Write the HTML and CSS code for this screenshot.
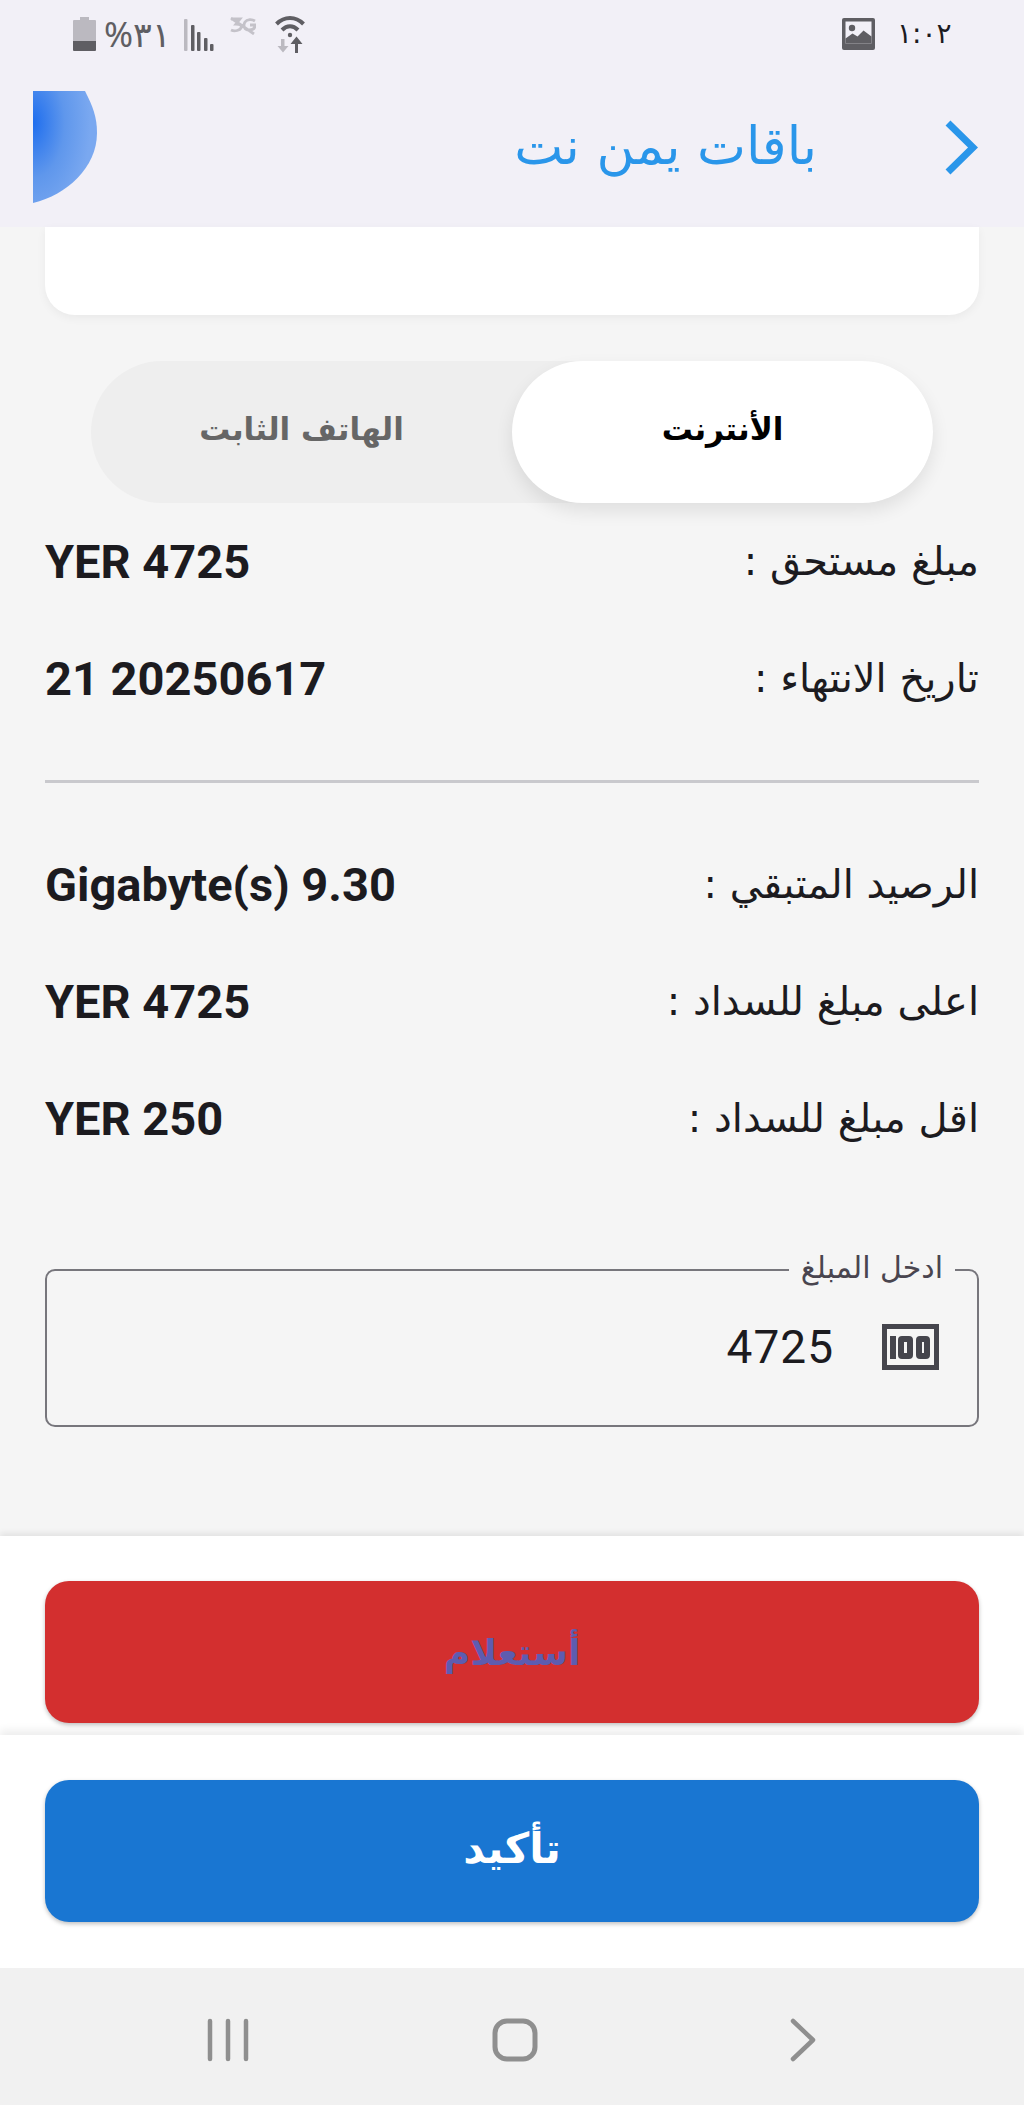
FILE: index.html
```html
<!DOCTYPE html>
<html lang="ar">
<head>
<meta charset="utf-8">
<title>باقات يمن نت</title>
<link rel="stylesheet" href="styles.css">
</head>
<body>
<div class="page">
  <header class="top">
    <div class="status">
      <div class="status-left">
        <svg class="i-batt" viewBox="0 0 23 34"><path fill="#bbb9c0" d="M7 0h9v3h6a1 1 0 0 1 1 1v22H0V4a1 1 0 0 1 1-1h6z"/><path fill="#5f5e63" d="M0 24h23v9a1 1 0 0 1-1 1H1a1 1 0 0 1-1-1z"/></svg>
        <span class="st-text">%٣١</span>
        <svg class="i-signal" viewBox="0 0 30 32"><rect x="0" y="0" width="3.5" height="32" rx="1" fill="#bbb9c0"/><rect x="7" y="6" width="3.5" height="26" rx="1" fill="#5f5e63"/><rect x="13" y="13" width="3.5" height="19" rx="1" fill="#5f5e63"/><rect x="20" y="19" width="3.5" height="13" rx="1" fill="#5f5e63"/><rect x="26" y="25" width="3.5" height="7" rx="1" fill="#5f5e63"/></svg>
        <svg class="i-3g" viewBox="0 0 26 18"><path fill="none" stroke="#c4c2c9" stroke-width="2.800" d="M1 2h9l-4 5c5 0 6 2 5 4s-6 4-10 2M25 4c-3-2-8-2-10 1s-1 8 4 8c3 0 6-1 6-5h-5M1 1l23 16"/></svg>
        <svg class="i-wifi" viewBox="0 0 30 38"><path fill="none" stroke="#5f5e63" stroke-width="4" d="M1.500 9c8-8 19-8 27 0M7 15c5-5 11-5 16 0"/><circle cx="15" cy="20" r="2.200" fill="#5f5e63"/><path fill="#bbb9c0" d="M6 24h3.500v7h4l-5.500 6.500-5.500-6.500h3.500z"/><path fill="#5f5e63" d="M20 38v-9h-4.500l6-7.500 6 7.500H23v9z"/></svg>
      </div>
      <div class="status-right">
        <svg class="i-pic" viewBox="0 0 33 32"><rect width="33" height="32" rx="2" fill="#5f5e63"/><rect x="3.500" y="3.500" width="26" height="22" fill="#f2f0f7"/><circle cx="10" cy="10" r="3.200" fill="#5f5e63"/><path fill="#5f5e63" d="M3.500 25.500v-5l7-5 5 3 6-6 8 6v7z"/></svg>
        <span class="st-time">١:٠٢</span>
      </div>
    </div>
    <div class="appbar">
      <svg class="logo" viewBox="0 0 64 112"><defs><radialGradient id="lg" cx="0" cy="0.28" r="0.9"><stop offset="0" stop-color="#1f6eee"/><stop offset="0.55" stop-color="#5f97ec"/><stop offset="1" stop-color="#7aa8f0"/></radialGradient></defs><path fill="url(#lg)" d="M0 0h52c8 16 12 26 12 42 0 34-30 62-64 70z"/></svg>
      <h1 class="title">باقات يمن نت</h1>
      <svg class="back" viewBox="0 0 33 55"><path fill="none" stroke="#2a96ea" stroke-width="7" d="M3 3l25 24.500L3 52"/></svg>
    </div>
  </header>

  <main class="content">
    <div class="card"></div>
    <div class="toggle">
      <div class="tab tab-on">الأنترنت</div>
      <div class="tab">الهاتف الثابت</div>
    </div>
    <div class="rows rows-a">
      <div class="row"><span class="lbl">مبلغ مستحق :</span><span class="val">YER 4725</span></div>
      <div class="row"><span class="lbl">تاريخ الانتهاء :</span><span class="val">21 20250617</span></div>
    </div>
    <hr class="rule">
    <div class="rows">
      <div class="row"><span class="lbl">الرصيد المتبقي :</span><span class="val">Gigabyte(s) 9.30</span></div>
      <div class="row"><span class="lbl">اعلى مبلغ للسداد :</span><span class="val">YER 4725</span></div>
      <div class="row"><span class="lbl">اقل مبلغ للسداد :</span><span class="val">YER 250</span></div>
    </div>
    <div class="field">
      <span class="field-label">ادخل المبلغ</span>
      <svg class="i-100" viewBox="0 0 57 46"><rect x="2.500" y="2.500" width="52" height="41" fill="none" stroke="#45454d" stroke-width="5"/><rect x="8" y="12" width="6" height="23" fill="#45454d"/><rect x="19" y="15" width="9" height="17" rx="1" fill="none" stroke="#45454d" stroke-width="6"/><rect x="37" y="15" width="8" height="17" rx="1" fill="none" stroke="#45454d" stroke-width="6"/></svg>
      <span class="field-value">4725</span>
    </div>
  </main>

  <section class="bar bar-red"><button class="btn btn-red">أستعلام</button></section>
  <section class="bar bar-blue"><button class="btn btn-blue">تأكيد</button></section>

  <nav class="nav">
    <svg class="n-recent" viewBox="0 0 42 44"><path stroke="#8f8f8f" stroke-width="4.500" stroke-linecap="round" d="M3 3v38M21 3v38M39 3v38"/></svg>
    <svg class="n-home" viewBox="0 0 46 44"><rect x="3" y="3" width="40" height="38" rx="12" fill="none" stroke="#8f8f8f" stroke-width="5"/></svg>
    <svg class="n-back" viewBox="0 0 26 44"><path fill="none" stroke="#8f8f8f" stroke-width="4.500" stroke-linecap="round" stroke-linejoin="round" d="M3 3l20 19L3 41"/></svg>
  </nav>
</div>
</body>
</html>
```

FILE: styles.css
```css
* { box-sizing: border-box; }
html, body { margin: 0; padding: 0; }
body { background: #f5f5f5; font-family: "DejaVu Sans", sans-serif; }
.page { width: 1024px; height: 2105px; display: flex; flex-direction: column; overflow: hidden; }

.top { height: 227px; background: #f2f0f7; flex: none; }
.status { height: 91px; padding: 15px 76px 0 73px; display: flex; justify-content: space-between; align-items: flex-start; }
.status-left, .status-right { display: flex; align-items: flex-start; padding-top: 2px; }
.i-batt { width: 23px; height: 34px; }
.st-text { font-family: "Noto Sans", "DejaVu Sans", sans-serif; font-size: 35px; line-height: 34px; color: #5f5e63; margin-left: 8px; width: 62px; white-space: nowrap; }
.i-signal { width: 30px; height: 32px; margin-left: 18px; margin-top: 2px; }
.i-3g { width: 26px; height: 18px; margin-left: 16px; }
.i-wifi { width: 30px; height: 38px; margin-left: 19px; margin-top: -2px; }
.i-pic { width: 33px; height: 32px; margin-top: 1px; }
.st-time { font-family: "DejaVu Sans", sans-serif; font-size: 28px; line-height: 34px; color: #1c1b1f; margin-left: 22px; width: 51px; white-space: nowrap; }

.appbar { height: 136px; padding: 0 46px 24px 33px; display: flex; align-items: flex-start; }
.logo { width: 64px; height: 112px; flex: none; }
.title { margin: 25px 0 0 418px; width: 302px; text-align: center; font-size: 52px; line-height: 60px; font-weight: 400; color: #2a96ea; white-space: nowrap; direction: rtl; }
.back { width: 33px; height: 55px; margin: 29px 0 0 auto; flex: none; }

.content { flex: 1; min-height: 0; padding: 0 45px; }
.card { height: 88px; background: #fff; border-radius: 0 0 30px 30px; box-shadow: 0 3px 10px rgba(0,0,0,.05); }
.toggle { margin: 46px 46px 0; height: 142px; background: #eeeeee; border-radius: 71px; display: flex; direction: rtl; }
.tab { flex: 1; display: flex; align-items: center; justify-content: center; padding-bottom: 6px; font-size: 31px; font-weight: 700; color: #666; border-radius: 71px; }
.tab-on { background: #fff; color: #000; box-shadow: 0 8px 18px rgba(0,0,0,.09); }

.rows { direction: rtl; display: flex; flex-direction: column; gap: 59px; }
.rows-a { margin-top: 29px; }
.row { height: 58px; display: flex; justify-content: space-between; align-items: center; }
.lbl { font-size: 40px; color: #1c1b1f; white-space: nowrap; }
.val { direction: ltr; font-family: Roboto, sans-serif; font-weight: 700; font-size: 47px; color: #1c1b1f; white-space: nowrap; }
.rule { border: 0; height: 3px; background: #c9c9cd; margin: 73px 0 72px; }

.field { position: relative; margin-top: 122px; height: 158px; border: 2.500px solid #77767c; border-radius: 10px; display: flex; direction: rtl; align-items: center; padding: 0 38px 0 0; }
.field-label { position: absolute; top: -20px; right: 22px; background: #f5f5f5; padding: 0 12px; font-size: 30px; line-height: 34px; color: #49454f; white-space: nowrap; }
.i-100 { width: 57px; height: 46px; flex: none; margin-bottom: 2px; }
.field-value { font-family: Roboto, sans-serif; font-size: 46px; letter-spacing: 1px; color: #1c1b1f; margin-right: 48px; direction: ltr; margin-bottom: 2px; }

.bar { flex: none; background: #fff; padding: 45px; }
.bar-red { height: 199px; box-shadow: 0 -3px 6px rgba(0,0,0,.08); padding-bottom: 12px; }
.bar-blue { height: 233px; padding-bottom: 45px; box-shadow: 0 -5px 8px rgba(0,0,0,.07); }
.btn { display: block; width: 100%; height: 142px; border: 0; border-radius: 24px; font-family: "DejaVu Sans", sans-serif; font-weight: 700; box-shadow: 0 2px 4px rgba(0,0,0,.25); padding: 0; }
.btn-red { background: #d32f2f; color: #5e5cb0; font-size: 36px; }
.btn-blue { background: #1976d2; color: #fff; font-size: 42px; padding-bottom: 6px; }

.nav { flex: none; height: 137px; background: #f1f1f1; display: flex; align-items: flex-start; padding: 50px 0 0 207px; }
.n-recent { width: 42px; height: 44px; }
.n-home { width: 46px; height: 44px; margin-left: 243px; }
.n-back { width: 26px; height: 44px; margin-left: 252px; }
```
